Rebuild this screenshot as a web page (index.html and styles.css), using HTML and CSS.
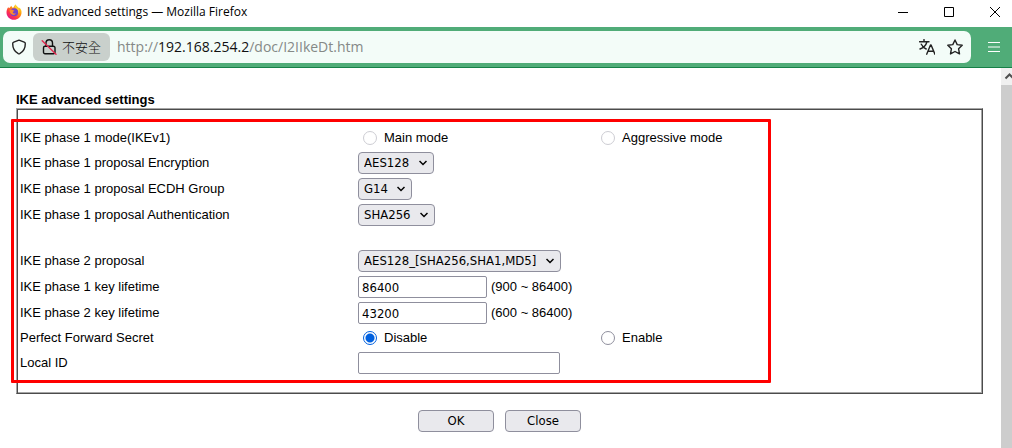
FILE: index.html
```html
<!DOCTYPE html>
<html lang="en">
<head>
<meta charset="utf-8">
<title>IKE advanced settings</title>
<link rel="stylesheet" href="styles.css">
</head>
<body>
<div class="window">
  <header class="titlebar">
    <svg class="logo" viewBox="0 0 16 16" aria-hidden="true">
      <defs>
        <linearGradient id="flame" x1="0.9" y1="0.1" x2="0.2" y2="0.95">
          <stop offset="0" stop-color="#ffe226"/>
          <stop offset="0.35" stop-color="#ff980e"/>
          <stop offset="0.7" stop-color="#ff3647"/>
          <stop offset="1" stop-color="#e31587"/>
        </linearGradient>
      </defs>
      <path fill="url(#flame)" d="M2.2 3.2C2.5 3.6 3 3.9 3.5 4 4 3 4.7 2.1 5.6 1.7 5.5 2.6 6 3.2 7 3.8 8 3 8.200 1.500 9.500 0.400 10.300 2 12 2.600 13 4.200 13.300 4.400 13.500 4 13.400 3.500 15 5 15.800 7 15.500 9.200 15 13 11.800 15.800 8 15.800 3.800 15.800 0.500 12.600 0.500 8.500 0.500 6.400 1.100 4.600 2.200 3.200Z"/>
      <circle cx="8.200" cy="8.200" r="4" fill="#7542c8"/>
      <path fill="#ff8a2a" d="M3.600 6C5 5.200 6.200 5.500 7 6.300L8.300 6.500C8.200 7.200 7.500 7.400 7 7.700 6.600 8.300 6.900 9.200 8 9.500 8.700 9.700 9.300 9.300 9.900 9.500 9.300 10.700 8 11.200 6.500 10.800 4.500 10 3.500 8.200 3.600 6Z"/>
      <path fill="#ffd030" d="M9 3.500C11.400 4.500 12.900 6.900 12.300 9.500 13.800 8 13.700 5.500 12 3.700 11 2.700 10 2 9.500 0.400 8.600 1.400 8.600 2.500 9 3.500Z"/>
    </svg>
    <span class="window-title">IKE advanced settings — Mozilla Firefox</span>
    <button class="window-button" aria-label="Minimize"><svg viewBox="0 0 12 12"><path d="M1 6.500h10"/></svg></button>
    <button class="window-button" aria-label="Maximize"><svg viewBox="0 0 12 12"><path d="M1.500 1.500h9v9h-9z"/></svg></button>
    <button class="window-button" aria-label="Close window"><svg viewBox="0 0 12 12"><path d="M1 1l10 10M11 1L1 11"/></svg></button>
  </header>
  <nav class="toolbar">
    <div class="address">
      <svg class="icon shield" viewBox="0 0 16 16" aria-hidden="true"><path d="M8 1.200L13.200 3.100Q14.300 3.500 14.300 4.700C14.300 9.500 11.800 13 8.700 14.700Q8 15 7.300 14.700C4.200 13 1.700 9.500 1.700 4.700Q1.700 3.500 2.800 3.100Z"/></svg>
      <button class="security">
        <svg class="icon" viewBox="0 0 16 16" aria-hidden="true"><path d="M5 7V4a3 3 0 0 1 6.500 0V7M4 7.200h8.500a1.500 1.500 0 0 1 1.500 1.500v4.600a1.500 1.500 0 0 1-1.500 1.500H4a1.500 1.500 0 0 1-1.500-1.500V8.700A1.500 1.500 0 0 1 4 7.200z"/><path class="slash" d="M1.200 1.800l13.800 13.400"/></svg>
        <span lang="zh-Hant">不安全</span>
      </button>
      <span class="url">http://<span class="host">192.168.254.2</span>/doc/I2IIkeDt.htm</span>
      <button class="tool" aria-label="Translate"><svg class="icon" viewBox="0 0 16 16"><path d="M.5 2.800h9.500M5 .5v2.300M7.900 3C7 6.300 4.500 8.700 1 10M2.300 5.200C3.500 7.500 5 9 7.200 10M7.700 15.200L11.500 6h.6l3.800 9.200M9 12.200h5.600"/></svg></button>
      <button class="tool" aria-label="Bookmark"><svg class="icon" viewBox="0 0 16 16"><path d="M8 1l2.200 4.600 5 .7-3.600 3.500.9 5.100L8 12.500l-4.500 2.400.9-5.100L.8 6.300l5-.7z"/></svg></button>
    </div>
    <button class="menu" aria-label="Menu"><svg viewBox="0 0 12 10"><path d="M0 .5h12M0 5h12M0 9.500h12"/></svg></button>
  </nav>
  <div class="viewport">
    <main class="page">
      <h1 class="heading">IKE advanced settings</h1>
      <form id="ike" class="panel">
        <div class="row" role="radiogroup" aria-labelledby="mode">
          <span id="mode">IKE phase 1 mode(IKEv1)</span>
          <label class="choice"><input type="radio" name="mode" disabled>Main mode</label>
          <label class="choice"><input type="radio" name="mode" disabled>Aggressive mode</label>
        </div>
        <div class="row field">
          <label for="enc">IKE phase 1 proposal Encryption</label>
          <div class="value"><select id="enc"><option>AES128</option></select></div>
        </div>
        <div class="row field">
          <label for="group">IKE phase 1 proposal ECDH Group</label>
          <div class="value"><select id="group"><option>G14</option></select></div>
        </div>
        <div class="row field section-end">
          <label for="auth">IKE phase 1 proposal Authentication</label>
          <div class="value"><select id="auth"><option>SHA256</option></select></div>
        </div>
        <div class="row field">
          <label for="p2">IKE phase 2 proposal</label>
          <div class="value"><select id="p2"><option>AES128_[SHA256,SHA1,MD5]</option></select></div>
        </div>
        <div class="row field">
          <label for="life1">IKE phase 1 key lifetime</label>
          <div class="value"><input class="text" id="life1" type="text" value="86400"><span>(900 ~ 86400)</span></div>
        </div>
        <div class="row field">
          <label for="life2">IKE phase 2 key lifetime</label>
          <div class="value"><input class="text" id="life2" type="text" value="43200"><span>(600 ~ 86400)</span></div>
        </div>
        <div class="row" role="radiogroup" aria-labelledby="pfs">
          <span id="pfs">Perfect Forward Secret</span>
          <label class="choice"><input type="radio" name="pfs" checked>Disable</label>
          <label class="choice"><input type="radio" name="pfs">Enable</label>
        </div>
        <div class="row field">
          <label for="local">Local ID</label>
          <div class="value"><input class="text wide" id="local" type="text"></div>
        </div>
        <div class="highlight"></div>
      </form>
      <div class="actions">
        <button class="action" form="ike" type="button">OK</button>
        <button class="action" type="button">Close</button>
      </div>
    </main>
    <div class="scrollbar" aria-hidden="true">
      <div class="scroll-up"><svg viewBox="0 0 17 17"><path d="M4.500 10.500l4-4 4 4"/></svg></div>
      <div class="thumb"></div>
    </div>
  </div>
</div>
</body>
</html>
```
FILE: styles.css
```css
* {
  box-sizing: border-box;
}

body {
  margin: 0;
  background: #fff;
  color: #000;
  font: 13px/16px "Liberation Sans", Arial, sans-serif;
}

button {
  padding: 0;
  border: 0;
  background: none;
  color: inherit;
  font: inherit;
}

svg {
  display: block;
  fill: none;
  stroke: currentColor;
}

.window {
  display: flex;
  flex-direction: column;
  min-height: 100vh;
}

/* Title bar */
.titlebar {
  display: flex;
  align-items: center;
  height: 27px;
  padding-left: 6px;
  padding-bottom: 4px;
}

.logo {
  width: 16px;
  height: 16px;
  stroke: none;
}

.window-title {
  flex: 1;
  padding-left: 5px;
  font: 12px/16px "Open Sans", "Noto Sans", sans-serif;
}

.window-button {
  display: grid;
  place-items: center;
  width: 46px;
  height: 23px;
}

.window-button:last-child {
  margin-right: -6px;
}

.window-button svg {
  width: 12px;
  height: 12px;
}

/* Toolbar */
.toolbar {
  display: flex;
  height: 41px;
  padding: 4px 0 4px 3px;
  border-bottom: 1px solid #168047;
  background: #50ac78;
}

.address {
  display: flex;
  flex: 1;
  align-items: center;
  padding: 0 8px;
  border-radius: 7px;
  background: #f3fcf8;
  color: #222;
}

.icon {
  width: 16px;
  height: 16px;
  stroke-width: 1.4;
  stroke-linejoin: round;
  stroke-linecap: round;
}

.security {
  display: flex;
  align-items: center;
  gap: 5px;
  height: 28px;
  margin: 0 7px 0 6px;
  padding: 0 9px 0 8px;
  border-radius: 6px;
  background: #c9d0cc;
  color: #111;
  font: 300 13px/20px "Noto Sans CJK TC", sans-serif;
}

.slash {
  stroke: #e22850;
}

.url {
  flex: 1;
  color: #858987;
  font: 14px/20px "Open Sans", "Noto Sans", sans-serif;
}

.host {
  color: #111;
}

.tool {
  margin-left: 12px;
}

.menu {
  display: grid;
  place-items: center;
  width: 41px;
  padding-left: 4px;
  color: #fff;
}

.menu svg {
  width: 12px;
  height: 10px;
}

/* Page */
.viewport {
  display: flex;
  flex: 1;
}

.page {
  flex: 1;
  padding: 24px 18px 16px 16px;
}

.heading {
  margin: 0;
  font-size: 13px;
  line-height: 16px;
}

.panel {
  position: relative;
  padding: 17px 3px;
  border: 1px solid;
  border-color: #a6a6a6 #4c4c4c #4c4c4c #a6a6a6;
  box-shadow: inset 1px 1px #4c4c4c, inset -1px -1px #a6a6a6;
}

.row {
  display: grid;
  grid-template-columns: 338px 238px 1fr;
  align-items: center;
  height: 24px;
}

.field {
  grid-template-columns: 338px 1fr;
  height: 26px;
}

.section-end {
  margin-bottom: 20px;
}

.value {
  display: flex;
  align-items: center;
  gap: 4px;
}

.choice {
  display: flex;
  align-items: center;
  gap: 7px;
  padding-left: 5px;
}

.choice input {
  appearance: none;
  width: 14px;
  height: 14px;
  margin: 0;
  border: 1px solid #8f8f9d;
  border-radius: 50%;
  background: #fff;
}

.choice input:disabled {
  border-color: #cdcdd3;
}

.choice input:checked {
  border-color: #0060df;
  background: radial-gradient(circle, #0060df 4px, #fff 5px);
}

select,
.text,
.action {
  height: 22px;
  border: 1px solid #8f8f9d;
  color: #000;
  font: 13px/16px "DejaVu Sans Condensed", Tahoma, "DejaVu Sans", sans-serif;
}

select {
  appearance: none;
  padding: 0 23px 0 5px;
  border-radius: 4px;
  background: #e9e9ed url("data:image/svg+xml,%3Csvg xmlns='http://www.w3.org/2000/svg' width='8' height='6'%3E%3Cpath d='M.5 1l3.500 3.500L7.500 1' fill='none' stroke='%23000' stroke-width='1.5'/%3E%3C/svg%3E") no-repeat right 6px center;
}

.text {
  width: 129px;
  padding: 0 3px;
  border-radius: 2px;
  background: #fff;
}

.wide {
  width: 202px;
}

.highlight {
  position: absolute;
  top: 10px;
  bottom: 10px;
  left: -6px;
  width: 760px;
  border: 3px solid #f00;
  border-radius: 1px;
  pointer-events: none;
}

.actions {
  display: flex;
  justify-content: center;
  gap: 11px;
  margin-top: 16px;
}

.action {
  width: 76px;
  border-radius: 4px;
  background: #e9e9ed;
}

/* Scrollbar */
.scrollbar {
  display: flex;
  flex-direction: column;
  width: 11px;
  overflow: hidden;
}

.scroll-up {
  height: 17px;
  background: #f0f0f0;
  color: #505050;
}

.scroll-up svg {
  width: 17px;
  height: 17px;
  stroke-width: 2;
}

.thumb {
  flex: 1;
  background: #cdcdcd;
}
```
